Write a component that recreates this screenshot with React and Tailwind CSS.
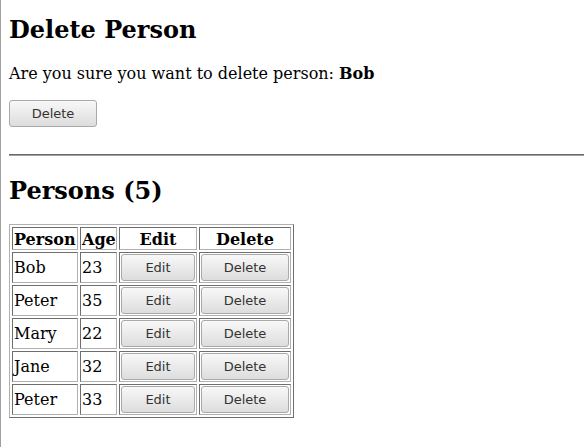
import React from "react";

const people = [
  ["Bob", 23],
  ["Peter", 35],
  ["Mary", 22],
  ["Jane", 32],
  ["Peter", 33],
];

function Btn({ children, w }) {
  return (
    <button
      className={`${w} block h-[27px] rounded-[3px] border border-[#a9a9a9] bg-gradient-to-b from-[#f8f8f8] to-[#dddddd] text-[13px] text-[#333] leading-none [font-family:'DejaVu_Sans',sans-serif]`}
    >
      {children}
    </button>
  );
}

const cell =
  "border border-t-[#6e6e6e] border-l-[#6e6e6e] border-b-[#b0b0b0] border-r-[#b0b0b0] p-px";

const head = `${cell} leading-[18px] align-top pt-[3px] pb-0`;

export default function App() {
  return (
    <div className="min-h-[447px] border-l border-[#a0a0a0] [font-family:'DejaVu_Serif',serif] text-black text-[16px]">
      <div className="px-2 pt-[16px] pb-2">
        <h2 className="text-[24px] font-bold leading-[28px] mb-[20px]">Delete Person</h2>
        <p className="leading-[19px] mb-[17px]">
          Are you sure you want to delete person: <b>Bob</b>
        </p>
        <Btn w="w-[88px]">Delete</Btn>
        <hr className="mt-[27px] mr-[-9px] border-0 border-t border-b border-t-[#6a6a6a] border-b-[#a0a0a0]" />
        <h2 className="text-[24px] font-bold leading-[28px] mt-[21px] mb-[19px]">Persons (5)</h2>
        <table className="table-fixed w-[285px] border-separate border-spacing-[2px] border border-t-[#b0b0b0] border-l-[#b0b0b0] border-b-[#6e6e6e] border-r-[#6e6e6e]">
          <colgroup>
            <col className="w-[66px]" />
            <col className="w-[37px]" />
            <col className="w-[78px]" />
            <col className="w-[92px]" />
          </colgroup>
          <thead>
            <tr className="h-[23px]">
              <th className={`${head} text-left`}>Person</th>
              <th className={`${head} text-left`}>Age</th>
              <th className={head}>Edit</th>
              <th className={head}>Delete</th>
            </tr>
          </thead>
          <tbody>
            {people.map(([n, a], i) => (
              <tr key={i} className="h-[31px]">
                <td className={`${cell} leading-[20px]`}>{n}</td>
                <td className={`${cell} leading-[20px]`}>{a}</td>
                <td className={cell}>
                  <Btn w="w-[74px]">Edit</Btn>
                </td>
                <td className={cell}>
                  <Btn w="w-[88px]">Delete</Btn>
                </td>
              </tr>
            ))}
          </tbody>
        </table>
      </div>
    </div>
  );
}
